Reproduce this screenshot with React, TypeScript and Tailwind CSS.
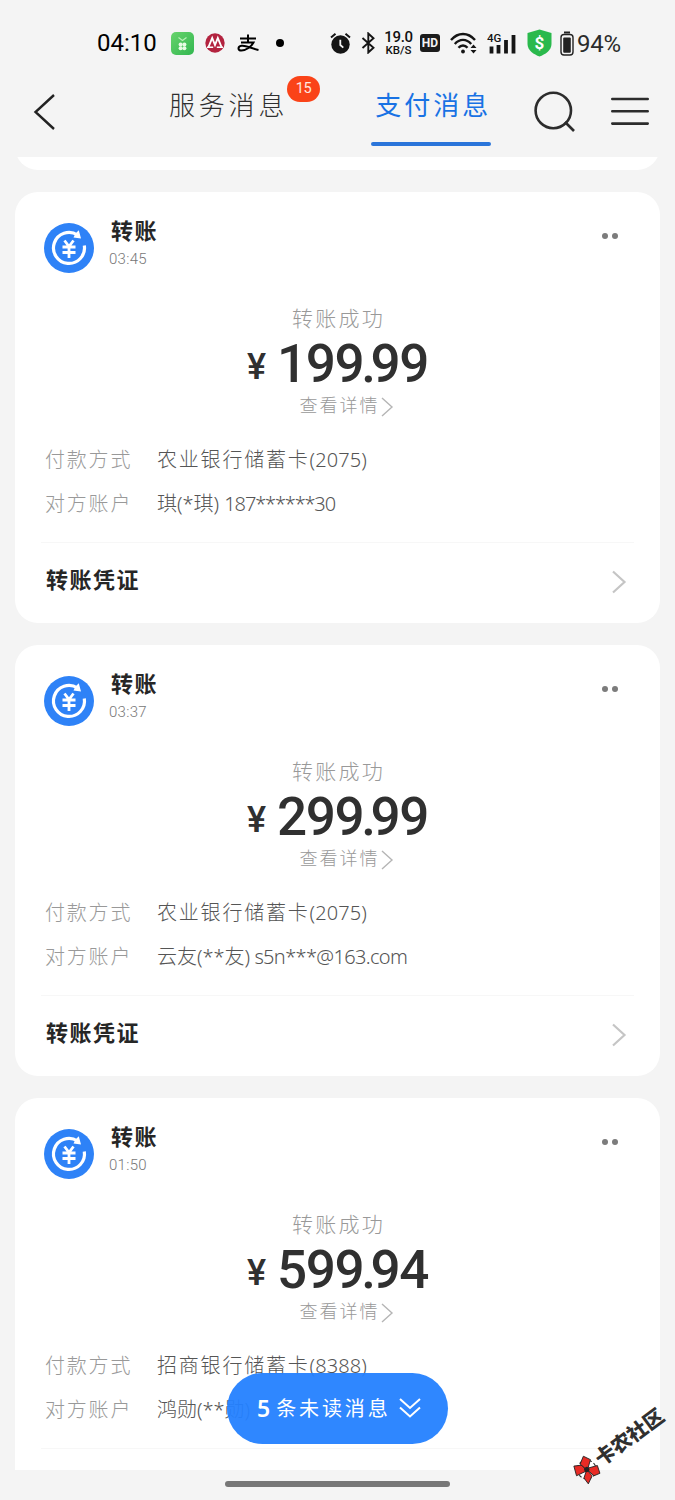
import React from "react";

const CJK = "font-['Noto_Sans','Noto_Sans_CJK_SC',sans-serif]";

type Transfer = {
  time: string;
  whole: string;
  cents: string;
  bank: string;
  bankNo: string;
  account: React.ReactNode;
};

const transfers: Transfer[] = [
  {
    time: "03:45",
    whole: "199",
    cents: "99",
    bank: "农业银行储蓄卡",
    bankNo: "(2075)",
    account: (
      <>
        <span>琪(*琪) </span>
        <span className="tracking-[-1.150px]">187******30</span>
      </>
    ),
  },
  {
    time: "03:37",
    whole: "299",
    cents: "99",
    bank: "农业银行储蓄卡",
    bankNo: "(2075)",
    account: (
      <>
        <span>云友(**友) </span>
        <span className="-ml-px tracking-[-0.650px]">s5n***@163.com</span>
      </>
    ),
  },
  {
    time: "01:50",
    whole: "599",
    cents: "94",
    bank: "招商银行储蓄卡",
    bankNo: "(8388)",
    account: <span>鸿勋(**勋)</span>,
  },
];

function StatusBar() {
  return (
    <div className="flex h-[86px] shrink-0 items-center pl-[97px] font-['Roboto',sans-serif] text-[#111]">
      <span className="w-[60px] whitespace-nowrap text-[24px] leading-none text-black">04:10</span>
      <svg className="ml-[14px] h-[23px] w-[23px] shrink-0" viewBox="0 0 23 23">
        <defs>
          <linearGradient id="app" x1="0" y1="0" x2="1" y2="1">
            <stop offset="0" stopColor="#68d36c" />
            <stop offset="1" stopColor="#32b750" />
          </linearGradient>
        </defs>
        <rect width="23" height="23" rx="5" fill="url(#app)" />
        <path d="M7.5 5.5 11.5 8.5 15.500 5.500" fill="none" stroke="#b9efb7" strokeWidth="1.2" />
        <g fill="#e6fbe3">
          <circle cx="9.600" cy="12.400" r="2" />
          <circle cx="13.400" cy="12.400" r="2" />
          <circle cx="9.600" cy="16.200" r="2" />
          <circle cx="13.400" cy="16.200" r="2" />
        </g>
      </svg>
      <svg className="ml-[11px] h-[20px] w-[20px] shrink-0" viewBox="0 0 20 20">
        <circle cx="10" cy="10" r="9.700" fill="#b3233f" />
        <path d="M3.500 14 7.200 5 10 12 12.800 5 16.500 14" fill="none" stroke="#fff" strokeWidth="1.900" />
        <path d="M2 14.300H8.200M11.800 14.300H18" stroke="#fff" strokeWidth="1.400" />
      </svg>
      <svg className="ml-[12px] h-[19px] w-[22px] shrink-0" viewBox="0 0 22 19" fill="none" stroke="#000" strokeWidth="2">
        <path d="M3 4.500H19M11 .5V8M4 8.500H16.500C14.500 12.500 9 16.500 4.500 16.500 .5 16.500 .5 12.500 4.500 11.800 9 11 14 14.500 21.500 16" />
      </svg>
      <span className="ml-[17px] h-[8px] w-[8px] shrink-0 rounded-full bg-black" />

      <svg className="ml-[46px] h-[23px] w-[21px] shrink-0" viewBox="0 0 21 23">
        <circle cx="10.500" cy="12.500" r="9.200" fill="#151515" />
        <path d="M1 5.500 5.500 1.800M20 5.500 15.500 1.800" stroke="#151515" strokeWidth="2" />
        <path d="M10.300 7.800V13L13.300 15.600" fill="none" stroke="#f4f4f4" strokeWidth="1.800" />
      </svg>
      <svg className="ml-[10px] h-[22px] w-[15px] shrink-0" viewBox="0 0 15 22" fill="none" stroke="#151515" strokeWidth="1.900">
        <path d="M1.500 6 12.500 15.700 7.300 20.500V1.500L12.500 6.300 1.500 16" />
      </svg>
      <div className="ml-[8px] flex w-[29px] flex-col items-center font-medium">
        <span className="text-[15px] leading-[14px] tracking-[-0.300px]">19.0</span>
        <span className="text-[11.500px] leading-[12px]">KB/S</span>
      </div>
      <span className="ml-[7px] flex h-[18px] w-[20px] shrink-0 items-center justify-center rounded-[3px] bg-[#1c1c1c] text-[12px] font-bold leading-none text-[#f4f4f4]">HD</span>
      <svg className="ml-[10px] h-[23px] w-[28px] shrink-0" viewBox="0 0 28 23" fill="none" stroke="#151515" strokeWidth="2.400">
        <path d="M1 8C8 0 18 0 25 8M4.800 12C9.500 6.500 16.500 6.500 21.200 12M8.500 15.800C11 12.800 15 12.800 17.500 15.800" />
        <circle cx="13" cy="19.500" r="1.900" fill="#151515" stroke="none" />
        <path d="M20.500 16 23.500 12.500 26.500 16ZM20.500 18 23.500 21.500 26.500 18Z" fill="#151515" stroke="none" />
      </svg>
      <svg className="ml-[9px] h-[23px] w-[30px] shrink-0" viewBox="0 0 30 23">
        <text x="0" y="10" fontFamily="Roboto" fontSize="11.500" fontWeight="500" fill="#151515">4G</text>
        <path d="M4.500 14.500V21.500M11.500 13V21.500M19 8V21.500M26.500 3V21.500" stroke="#151515" strokeWidth="3.800" />
      </svg>
      <svg className="ml-[10px] h-[28px] w-[25px] shrink-0" viewBox="0 0 25 28">
        <path d="M12.500.5 24.500 4V15C24.500 21.500 18 25.500 12.500 27.500 7 25.500.5 21.500.5 15V4Z" fill="#2ab94c" />
        <text x="12.500" y="19.500" textAnchor="middle" fontFamily="Roboto" fontSize="17" fontWeight="700" fill="#fff">$</text>
      </svg>
      <svg className="ml-[8px] h-[25px] w-[14px] shrink-0" viewBox="0 0 14 25">
        <path d="M4 1.500H10" stroke="#222" strokeWidth="2" />
        <rect x="1" y="3.500" width="12" height="20.500" rx="3" fill="none" stroke="#222" strokeWidth="1.400" />
        <rect x="3.200" y="6.500" width="7.600" height="15.300" rx="1" fill="#222" />
      </svg>
      <span className="ml-[3px] whitespace-nowrap pt-[2px] text-[24px] leading-none tracking-[-0.200px] text-[#2b2b2b]">94%</span>
    </div>
  );
}

function NavBar() {
  return (
    <div className="flex h-[71px] shrink-0 items-start">
      <svg className="ml-[32px] mt-[7px] h-[38px] w-[24px] shrink-0" viewBox="0 0 24 38" fill="none" stroke="#222" strokeWidth="2.400">
        <path d="M22 2 3.500 19 22 36" />
      </svg>
      <div className="relative ml-[113px] whitespace-nowrap pt-[2px] text-[26px] font-light leading-[34px] tracking-[3.800px] text-[#2f2f2f]">
        服务消息
        <span className="absolute left-[118px] top-[-10px] flex h-[26px] w-[33px] items-center justify-center rounded-full bg-[#fa4318] font-['Roboto',sans-serif] text-[14.500px] font-normal leading-none tracking-[-0.300px] text-[#ffe9e2]">15</span>
      </div>
      <div className="ml-[83px] flex h-[60px] w-[120px] shrink-0 flex-col items-start justify-between">
        <span className="whitespace-nowrap pl-[4px] pt-[2px] text-[26px] leading-[34px] tracking-[3px] text-[#1872e4]">支付消息</span>
        <span className="h-[4px] w-[120px] rounded-full bg-[#2a75da]" />
      </div>
      <svg className="ml-[43px] mt-[5px] h-[44px] w-[44px] shrink-0" viewBox="0 0 44 44" fill="none" stroke="#2c2c2c" strokeWidth="2.600">
        <circle cx="19.300" cy="19.500" r="17.700" />
        <path d="M31 31 40 40" />
      </svg>
      <svg className="ml-[33px] mt-[10px] h-[32px] w-[38px] shrink-0" viewBox="0 0 38 32" stroke="#2c2c2c" strokeWidth="2.600" strokeLinecap="round">
        <path d="M1.300 3H36.700M1.300 15.300H36.700M1.300 27.600H36.700" />
      </svg>
    </div>
  );
}

function TransferIcon() {
  return (
    <svg className="h-[50px] w-[50px] shrink-0" viewBox="0 0 50 50" fill="none" stroke="#fff">
      <circle cx="25" cy="25" r="25" fill="#2e82f7" stroke="none" />
      <path d="M33.500 12A15.500 15.500 0 1 0 40.300 22.500" strokeWidth="3.200" />
      <path d="M31.500 10.500 34.800 7.200 37 15.500 29.500 14.500Z" fill="#fff" stroke="none" />
      <path d="M20.500 17.500 25 23.500 29.500 17.500M25 23.500V35M18.500 24H31.500M18.500 29.500H31.500" strokeWidth="2.800" />
    </svg>
  );
}

function Card({ t }: { t: Transfer }) {
  return (
    <section className="h-[431px] shrink-0 rounded-[23px] bg-white px-[26px]">
      <div className="flex h-[107px] items-start pl-[3px] pt-[31px]">
        <TransferIcon />
        <div className="ml-[15px] mt-[-6px] flex flex-1 flex-col">
          <span className="pl-[2px] text-[22px] font-bold leading-[26px] tracking-[1.500px] text-[#262626]">转账</span>
          <span className="mt-[7px] font-['Roboto',sans-serif] text-[15px] font-light leading-[18px] tracking-[0.300px] text-[#777]">{t.time}</span>
        </div>
        <div className="mr-[16px] mt-[10px] flex gap-[4px]">
          <span className="h-[6px] w-[6px] rounded-full bg-[#7c7c7c]" />
          <span className="h-[6px] w-[6px] rounded-full bg-[#7c7c7c]" />
        </div>
      </div>
      <div className="flex h-[138px] flex-col items-center">
        <span className="mt-[6px] pl-[2px] text-[21px] font-light leading-[26px] tracking-[2.200px] text-[#999]">转账成功</span>
        <div className="mt-[7px] flex h-[54px] items-baseline whitespace-nowrap font-['Roboto',sans-serif] font-medium leading-[52px] text-[#303030]">
          <span className="mr-[8px] w-[22px] -translate-y-[3px] text-[36px]">¥</span>
          <span className="text-[53px] tracking-[-1.400px]">{t.whole}</span>
          <span className="-ml-[2px] -mr-[4px] text-[53px] tracking-[-1.400px]">.</span>
          <span className="text-[53px] tracking-[-1.400px]">{t.cents}</span>
        </div>
        <div className="flex items-center pl-[18px]">
          <span className="text-[18px] font-light leading-[26px] tracking-[2px] text-[#999]">查看详情</span>
          <svg className="mt-[4px] h-[20px] w-[14px]" viewBox="0 0 14 20" fill="none" stroke="#b5b5b5" strokeWidth="1.400">
            <path d="M2 1 12 10 2 19" />
          </svg>
        </div>
      </div>
      <div className="h-[106px] border-b border-[#f7f7f7] pl-[4px] text-[20px] font-light">
        <div className="flex h-[44px] items-center pt-px">
          <span className="w-[112px] tracking-[1.800px] text-[#999]">付款方式</span>
          <span className="whitespace-nowrap text-[#555]">
            <span className="tracking-[1.800px]">{t.bank}</span>
            <span className="tracking-[0.100px]">{t.bankNo}</span>
          </span>
        </div>
        <div className="flex h-[44px] items-center pt-px">
          <span className="w-[112px] tracking-[1.800px] text-[#999]">对方账户</span>
          <span className="whitespace-nowrap text-[#555]">{t.account}</span>
        </div>
      </div>
      <div className="flex h-[78px] items-center justify-between pl-[5px] pr-[7px]">
        <span className="pb-[6px] text-[22px] font-bold leading-[28px] tracking-[1.500px] text-[#262626]">转账凭证</span>
        <svg className="mb-px h-[24px] w-[16px]" viewBox="0 0 16 24" fill="none" stroke="#c5c5c5" strokeWidth="2.200">
          <path d="M2 1.500 13.500 12 2 22.500" />
        </svg>
      </div>
    </section>
  );
}

function UnreadPill() {
  return (
    <button className="absolute left-[227px] top-[1373px] flex h-[71px] w-[221px] items-center whitespace-nowrap rounded-full bg-[#2481ff]/95 pl-[30px] text-white">
      <span className="font-['Noto_Sans',sans-serif] text-[23px] font-semibold leading-none">5</span>
      <span className="ml-[6px] text-[20px] leading-none tracking-[2.900px]">条未读消息</span>
      <svg className="mb-px ml-[8px] h-[22px] w-[22px]" viewBox="0 0 22 22" fill="none" stroke="#fff" strokeWidth="2">
        <path d="M1 2 11 11 21 2M1 10.500 11 19.500 21 10.500" />
      </svg>
    </button>
  );
}

function Watermark() {
  return (
    <div className="absolute left-[565px] top-[1431px] flex h-[28px] w-[108px] rotate-[-36.500deg] items-center whitespace-nowrap">
      <svg className="h-[27px] w-[27px] shrink-0" viewBox="0 0 26 26">
        <circle cx="13" cy="13" r="9" fill="#fff" stroke="#333" strokeWidth="1" strokeDasharray="3 2" />
        <g fill="#e82b25" stroke="#222" strokeWidth=".8">
          <path d="M12 14 1.500 12 5 3 12 7Z" />
          <path d="M13 14 11 5 18 .8 21.500 7.500Z" />
          <path d="M13 13 6 18 6 25 13.500 21Z" />
          <path d="M13 12 15 22 21 23.500 23.500 16Z" />
        </g>
        <circle cx="13" cy="13" r="2.500" fill="#222" />
      </svg>
      <span className="text-[20px] font-black leading-none text-[#303030]">卡农社区</span>
    </div>
  );
}

export default function App() {
  return (
    <main className={`relative flex h-[1500px] w-[675px] flex-col overflow-hidden bg-[#f4f4f4] ${CJK}`}>
      <StatusBar />
      <NavBar />
      <div className="flex h-[1313px] shrink-0 flex-col gap-[22px] overflow-hidden px-[15px]">
        <div className="flex h-[13px] shrink-0 flex-col justify-end overflow-hidden">
          <div className="h-[60px] shrink-0 rounded-[23px] bg-white" />
        </div>
        {transfers.map((t) => (
          <Card key={t.time} t={t} />
        ))}
      </div>
      <div className="flex flex-1 items-start justify-center pt-[11px]">
        <span className="h-[6px] w-[225px] rounded-full bg-[#777]" />
      </div>
      <UnreadPill />
      <Watermark />
    </main>
  );
}
